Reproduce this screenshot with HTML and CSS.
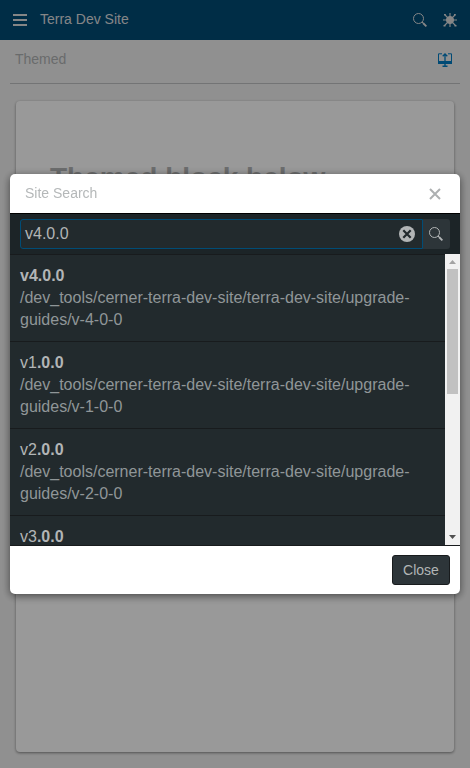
FILE: index.html
```html
<!DOCTYPE html>
<html lang="en">
<head>
<meta charset="utf-8">
<title>Terra Dev Site</title>
<link rel="stylesheet" href="styles.css">
</head>
<body>
<div class="app">
  <header class="bar">
    <svg class="menu" width="14" height="12" viewBox="0 0 14 12"><path d="M0 1h14M0 6h14M0 11h14" stroke="currentColor" stroke-width="2"/></svg>
    <span class="brand">Terra Dev Site</span>
    <svg class="find" width="14" height="14" viewBox="0 0 14 14" fill="none" stroke="currentColor"><circle cx="5.5" cy="5.5" r="5"/><path d="M9 9l1.2 1.2" /><path d="M10 10l3.4 3.4" stroke-width="1.8"/></svg>
    <svg class="bug" width="14" height="14" viewBox="0 0 14 14" stroke="currentColor" fill="currentColor"><circle cx="7" cy="7" r="3.6"/><path d="M7 0v14M0 7h14M2 2L12.5 12.5M12 2L1.5 12.5" fill="none" stroke-width="1.1"/><path d="M1 1.8h1.8M11 1.8h1.8M.5 12.7h2M11.5 12.7h2" stroke-width="1.6"/></svg>
  </header>
  <div class="tabs">
    <span>Themed</span>
    <svg width="14" height="14" viewBox="0 0 14 14" fill="none" stroke="currentColor"><path d="M4 .8H.5v8h13v-8H10"/><path d="M0 9.5h14" stroke-width="3"/><path d="M7 8V1M4.7 3.2L7 1l2.3 2.2" stroke-width="1.3"/><path d="M7 10v3M4.5 13.3h5" stroke-width="1.4"/></svg>
  </div>
  <main class="card"><h1>Themed block below</h1></main>
</div>
<div class="overlay">
  <section class="modal">
    <div class="modal-head">
      <span>Site Search</span>
      <svg width="12" height="12" viewBox="0 0 12 12"><path d="M1 1l10 10M11 1L1 11" stroke="currentColor" stroke-width="2"/></svg>
    </div>
    <div class="search">
      <div class="field">
        <span>v4.0.0</span>
        <svg width="16" height="16" viewBox="0 0 16 16"><circle cx="8" cy="8" r="8" fill="#b2b5b6"/><path d="M4.3 4.3l7.4 7.4M11.7 4.3l-7.4 7.4" stroke="#222a2d" stroke-width="2.2"/></svg>
      </div>
      <div class="go"><svg width="14" height="14" viewBox="0 0 14 14" fill="none" stroke="currentColor"><circle cx="5.5" cy="5.5" r="5"/><path d="M9 9l1.2 1.2"/><path d="M10 10l3.4 3.4" stroke-width="1.8"/></svg></div>
    </div>
    <div class="results">
      <div class="list">
        <div class="item"><div class="title"><b>v4.0.0</b></div><div>/dev_tools/cerner-terra-dev-site/terra-dev-site/upgrade-guides/v-4-0-0</div></div>
        <div class="item"><div class="title">v1<b>.0.0</b></div><div>/dev_tools/cerner-terra-dev-site/terra-dev-site/upgrade-guides/v-1-0-0</div></div>
        <div class="item"><div class="title">v2<b>.0.0</b></div><div>/dev_tools/cerner-terra-dev-site/terra-dev-site/upgrade-guides/v-2-0-0</div></div>
        <div class="item"><div class="title">v3<b>.0.0</b></div></div>
      </div>
      <div class="scroll">
        <svg width="7" height="4" viewBox="0 0 7 4"><path d="M0 4L3.5 0 7 4z" fill="#a3a3a3"/></svg>
        <div class="thumb"></div>
        <svg class="down" width="7" height="4" viewBox="0 0 7 4"><path d="M0 0h7L3.5 4z" fill="#505050"/></svg>
      </div>
    </div>
    <footer><button>Close</button></footer>
  </section>
</div>
</body>
</html>
```
FILE: styles.css
```css
* { box-sizing: border-box; }
body {
  margin: 0;
  height: 768px;
  overflow: hidden;
  font-family: "Liberation Sans", Arial, sans-serif;
  font-size: 14px;
}
svg { display: block; flex: none; }
.app {
  height: 768px;
  display: flex;
  flex-direction: column;
  background: #f1f1f1;
}
.bar {
  height: 40px;
  display: flex;
  align-items: center;
  padding: 0 13px;
  background: #004c76;
  color: #dedfe0;
}
.brand { flex: 1; margin: -2px 0 0 13px; }
.bug { margin-left: 16px; }
.tabs {
  height: 44px;
  margin: 0 10px;
  padding: 0 8px 5px 5px;
  display: flex;
  align-items: center;
  justify-content: space-between;
  border-bottom: 1px solid #c0c2c3;
  color: #b0b3b4;
}
.tabs svg { color: #007cc3; margin-top: 1px; }
.card {
  height: 651px;
  margin: 17px 16px 0;
  padding: 61px 34px 0;
  border-radius: 4px;
  background: #fff;
  box-shadow: 0 1px 3px rgba(0, 0, 0, .45);
}
h1 {
  margin: 0;
  font-size: 28px;
  line-height: 32px;
  color: #b4b6b7;
  white-space: nowrap;
}
.overlay {
  position: fixed;
  inset: 0;
  padding: 174px 10px;
  background: rgba(0, 0, 0, .4);
}
.modal {
  height: 420px;
  display: flex;
  flex-direction: column;
  overflow: hidden;
  border-radius: 5px;
  background: #fff;
  box-shadow: 0 2px 8px rgba(0, 0, 0, .55);
}
.modal-head {
  height: 39px;
  display: flex;
  align-items: center;
  justify-content: space-between;
  padding: 0 19px 0 15px;
  color: #b5b8b9;
}
.modal-head span { margin-top: -2px; }
.modal-head svg { color: #adb0b1; margin-top: 1px; }
.search {
  height: 41px;
  display: flex;
  padding: 5px 10px;
  border-top: 1px solid #000;
  background: #1c2427;
}
.field {
  flex: 1;
  height: 30px;
  display: flex;
  align-items: center;
  justify-content: space-between;
  padding: 0 7px 0 4px;
  border: 1px solid #004c76;
  border-radius: 3px 0 0 3px;
  background: #222a2d;
  color: #b2b5b6;
  font-size: 16px;
}
.go {
  width: 27px;
  height: 30px;
  padding: 8px 0 0 6px;
  border-radius: 0 3px 3px 0;
  background: #2d3539;
  color: #b2b5b6;
}
.results {
  height: 292px;
  display: flex;
  overflow: hidden;
  border-bottom: 1px solid #181b1d;
  background: #222a2d;
}
.list { flex: 1; border-top: 1px solid #181b1d; }
.item {
  height: 87px;
  padding: 10px 30px 0 10px;
  border-bottom: 1px solid #181b1d;
  color: #909698;
  font-size: 16px;
  line-height: 22px;
}
.title { color: #b2b5b6; }
.scroll {
  width: 15px;
  display: flex;
  flex-direction: column;
  align-items: center;
  padding-top: 6px;
  background: #f1f1f1;
}
.thumb { width: 11px; height: 125px; margin-top: 5px; background: #c1c1c1; }
.down { margin: auto 0 6px; }
footer {
  display: flex;
  justify-content: flex-end;
  padding: 9px 10px;
}
button {
  width: 58px;
  height: 30px;
  padding: 0 0 1px;
  border: 1px solid #181b1d;
  border-radius: 3px;
  background: #2d3539;
  color: #b2b5b6;
  font: 14px "Liberation Sans", Arial, sans-serif;
}
```
